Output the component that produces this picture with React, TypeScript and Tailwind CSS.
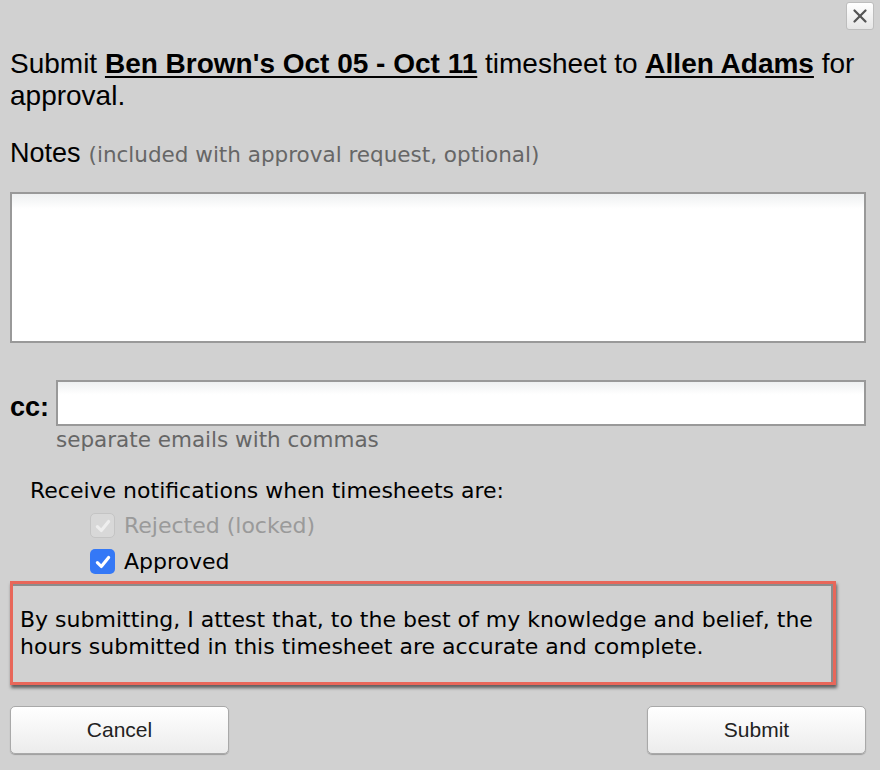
import { X } from "lucide-react";

const verdana = "font-['Verdana','DejaVu_Sans',sans-serif]";

const CheckBox = ({ checked, disabled }: { checked: boolean; disabled?: boolean }) => (
  <span
    className={
      disabled
        ? "flex h-[25px] w-[25px] shrink-0 items-center justify-center rounded-[5px] border border-[#c4c4c4] bg-[#d8d8d8]"
        : "flex h-[25px] w-[25px] shrink-0 items-center justify-center rounded-[5px] bg-[#3478f6]"
    }
  >
    {checked && (
      <svg viewBox="0 0 16 16" className="h-[18px] w-[18px]">
        <path
          d="M3 8.5 L6.5 12 L13 4"
          fill="none"
          stroke={disabled ? "#eeeeee" : "#ffffff"}
          strokeWidth="2.8"
          strokeLinecap="round"
          strokeLinejoin="round"
        />
      </svg>
    )}
  </span>
);

const DialogButton = ({ label }: { label: string }) => (
  <button className="h-[48px] w-[219px] rounded-[5px] border border-[#a9a9a9] bg-gradient-to-b from-white to-[#ececec] font-['Liberation_Sans',Arial,sans-serif] text-[21px] text-[#222] shadow-[0_1px_1px_rgba(0,0,0,0.25)]">
    {label}
  </button>
);

export default function App() {
  return (
    <div className="relative h-[770px] w-[880px] overflow-hidden bg-[#d1d1d1] font-['Liberation_Sans',Arial,sans-serif] text-black">
      <button className="absolute right-[6px] top-[2px] flex h-[28px] w-[28px] items-center justify-center rounded-[3px] border border-[#bdbdbd] bg-gradient-to-b from-white to-[#e6e6e6]">
        <X className="h-[22px] w-[22px] text-[#555]" strokeWidth={2.5} />
      </button>

      <div className="w-[866px] pl-[10px] pt-[48px]">
        <p className="text-[28px] leading-[32px]">
          Submit <b className="underline underline-offset-[3px]">Ben Brown's Oct 05 - Oct 11</b> timesheet to{" "}
          <b className="underline underline-offset-[3px]">Allen Adams</b> for approval.
        </p>

        <div className="mt-[25px] flex items-baseline gap-[8px] leading-[32px]">
          <span className="text-[27px]">Notes</span>
          <span className={`${verdana} text-[21.5px] text-[#666]`}>
            (included with approval request, optional)
          </span>
        </div>

        <textarea className="mt-[21px] block h-[151px] w-[856px] resize-none border-2 border-[#999] bg-gradient-to-b from-[#eef0f1] via-white via-[10%] to-white outline-none" />

        <div className="mt-[37px] flex items-center gap-[8px]">
          <span className="mt-[8px] w-[38px] text-[27px] font-bold leading-[30px]">cc:</span>
          <input className="h-[46px] w-[810px] border-2 border-[#999] bg-gradient-to-b from-[#eef0f1] via-white via-[30%] to-white outline-none" />
        </div>
        <p className={`${verdana} ml-[46px] mt-[1px] text-[21.5px] leading-[26px] text-[#666]`}>
          separate emails with commas
        </p>

        <p className={`${verdana} ml-[20px] mt-[25px] text-[22px] leading-[26px]`}>
          Receive notifications when timesheets are:
        </p>
        <div className={`${verdana} ml-[80px] mt-[9px] flex flex-col gap-[11px] text-[22px]`}>
          <label className="flex h-[25px] items-center gap-[9px] text-[#9a9a9a]">
            <CheckBox checked disabled />
            Rejected (locked)
          </label>
          <label className="flex h-[25px] items-center gap-[9px]">
            <CheckBox checked />
            Approved
          </label>
        </div>

        <div className="mt-[7px] w-[826px] border-[3px] border-[#e8675a] shadow-[1px_3px_3px_rgba(0,0,0,0.55)]">
          <div className={`${verdana} h-[98px] border-t-2 border-r-2 border-[#8c8c8c] px-[7px] pt-[20px] text-[22px] leading-[27px]`}>
            By submitting, I attest that, to the best of my knowledge and belief, the hours submitted in this
            timesheet are accurate and complete.
          </div>
        </div>

        <div className="mt-[21px] flex w-[856px] justify-between">
          <DialogButton label="Cancel" />
          <DialogButton label="Submit" />
        </div>
      </div>
    </div>
  );
}
